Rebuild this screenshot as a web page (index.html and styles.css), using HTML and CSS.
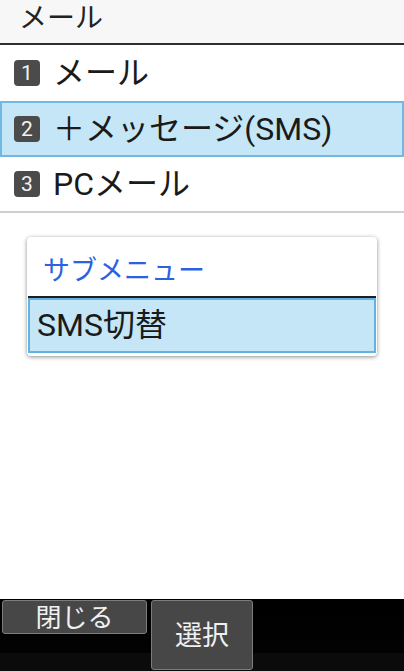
FILE: index.html
```html
<!DOCTYPE html>
<html lang="ja">
<head>
<meta charset="utf-8">
<title>メール</title>
<link rel="stylesheet" href="styles.css">
</head>
<body>
<div class="screen">
  <header class="title">メール</header>
  <ul class="menu">
    <li class="item"><span class="badge">1</span><span class="label">メール</span></li>
    <li class="item selected"><span class="badge">2</span><span class="label">＋メッセージ(SMS)</span></li>
    <li class="item last"><span class="badge">3</span><span class="label">PCメール</span></li>
  </ul>
  <main class="content">
    <div class="submenu">
      <div class="submenu-title">サブメニュー</div>
      <div class="submenu-item">SMS切替</div>
    </div>
  </main>
  <footer class="softkeys">
    <div class="key key-small">閉じる</div>
    <div class="key key-big">選択</div>
  </footer>
</div>
</body>
</html>
```
FILE: styles.css
```css
* { box-sizing: border-box; }
html, body { margin: 0; padding: 0; }
body {
  width: 404px;
  height: 671px;
  overflow: hidden;
  background: #fff;
  font-family: Roboto, "Noto Sans CJK JP", "Noto Sans", sans-serif;
  color: #1a1a1a;
}
.screen {
  display: flex;
  flex-direction: column;
  height: 671px;
}
.title {
  height: 45px;
  padding-left: 19px;
  font-size: 28px;
  line-height: 38px;
  background: #f7f7f7;
  border-bottom: 2px solid #2e2e2e;
  color: #222;
}
.menu {
  list-style: none;
  margin: 0;
  padding: 0;
}
.item {
  display: flex;
  align-items: center;
  height: 56px;
  padding-left: 14px;
  border: 2px solid transparent;
  border-left: 0;
  border-right: 0;
}
.item.selected {
  background: #c4e6f6;
  border: 2px solid #71b8e2;
  padding-left: 12px;
}
.item.last {
  height: 56px;
  border-top: 0;
  border-bottom: 2px solid #cfcfcf;
}
.badge {
  width: 26px;
  height: 26px;
  border-radius: 4px;
  background: #4b4b4b;
  color: #f2f2f2;
  font-size: 21px;
  line-height: 26px;
  text-align: center;
  flex: none;
}
.label {
  margin-left: 13px;
  font-size: 32px;
  line-height: 1;
  color: #1a1a1a;
}
.content {
  flex: 1;
  padding-top: 24px;
  padding-left: 27px;
}
.submenu {
  width: 350px;
  background: #fff;
  border-radius: 4px;
  box-shadow: 0 1px 4px rgba(0,0,0,0.45);
  padding: 0 1px 3px;
}
.submenu-title {
  height: 61px;
  padding-left: 15px;
  padding-top: 19px;
  font-size: 27px;
  line-height: 30px;
  color: #2a62df;
  border-bottom: 2px solid #1e1e1e;
}
.submenu-item {
  height: 55px;
  background: #c4e6f6;
  border: 2px solid #62b2e4;
  padding-left: 7px;
  font-size: 32px;
  line-height: 50px;
  color: #1a1a1a;
}
.softkeys {
  height: 72px;
  display: flex;
  align-items: flex-start;
  gap: 4px;
  padding: 1px 0 0 2px;
  background: linear-gradient(#000 0, #020202 54px, #0b0b0b 54px);
}
.key {
  background: #474747;
  border: 1px solid #7c7c7c;
  border-radius: 3px;
  color: #f0f0f0;
  text-align: center;
  font-family: "Noto Sans CJK JP", sans-serif;
}
.key-small {
  width: 145px;
  height: 34px;
  font-size: 26px;
  line-height: 30px;
}
.key-big {
  width: 102px;
  height: 70px;
  font-size: 27px;
  line-height: 66px;
}
```
